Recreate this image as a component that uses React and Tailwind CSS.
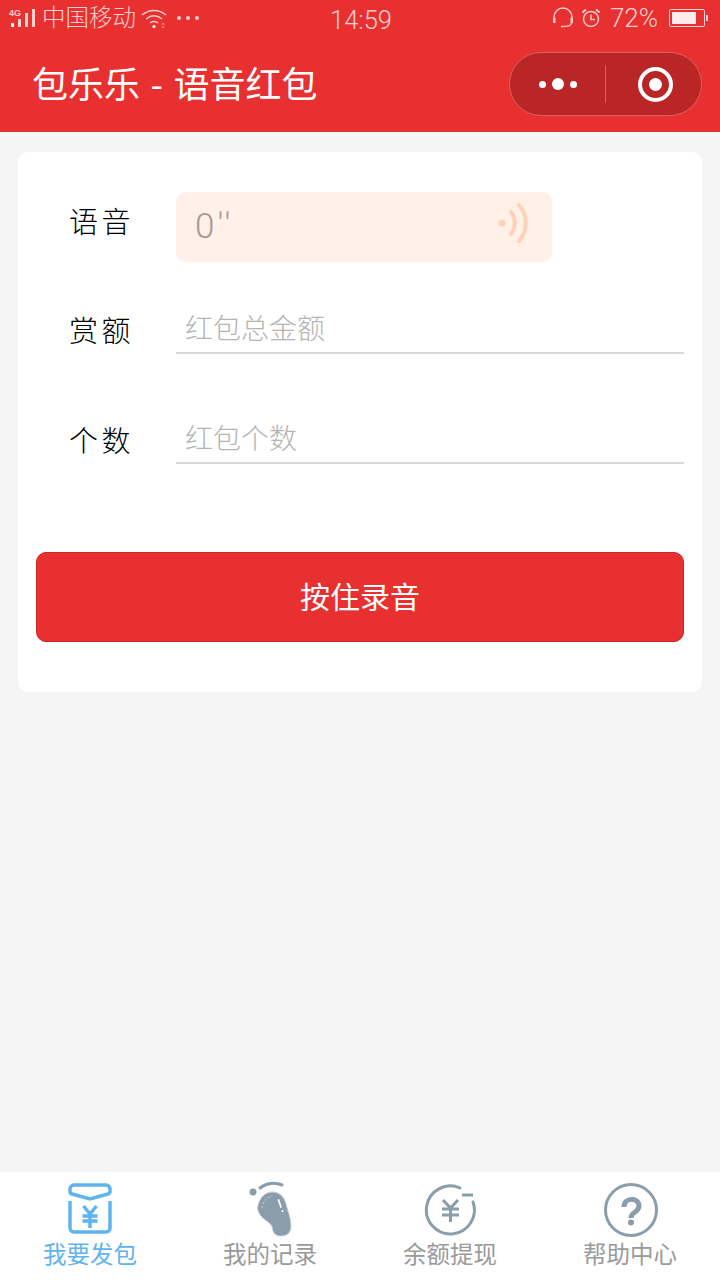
function StatusBar() {
    return (
        <div className="h-[40px] flex items-center justify-between text-[23.5px] text-[#fbd0d0] relative">
            <div className="flex items-center pl-[9px] h-full">
                <svg width="28" height="22" viewBox="0 0 28 22" className="-mt-[2px]">
                    <text x="0" y="8" fontSize="9" fontWeight="700" fill="#fbd0d0" fontFamily="Liberation Sans, sans-serif">4G</text>
                    <rect x="2" y="15" width="3" height="4" fill="#fff" />
                    <rect x="9" y="11" width="3" height="8" fill="#fbd0d0" />
                    <rect x="16" y="5" width="3" height="14" fill="#fbd0d0" />
                    <rect x="23" y="1" width="3" height="18" fill="#fbd0d0" />
                </svg>
                <span className="ml-[5px] leading-none -mt-[7px] font-light">中国移动</span>
                <svg width="26" height="20" viewBox="0 0 26 20" className="ml-[5px] -mt-[2px]" fill="none" stroke="#fbd0d0" strokeWidth="1.6">
                    <path d="M1 6 C8 0 18 0 25 6" />
                    <path d="M5 10 C10 6 16 6 21 10" />
                    <path d="M9 14 C11 12 15 12 17 14" />
                    <circle cx="13" cy="17.5" r="1.6" fill="#fff" stroke="none" />
                    <path d="M20 15.5 h4 l-2 -2z M20 17.5 h4 l-2 2z" fill="#f58a8a" stroke="none" />
                </svg>
                <div className="flex gap-[5px] ml-[10px] -mt-[4px]">
                    <span className="w-[4px] h-[4px] rounded-full bg-[#fbd0d0]" />
                    <span className="w-[4px] h-[4px] rounded-full bg-[#fbd0d0]" />
                    <span className="w-[4px] h-[4px] rounded-full bg-[#fbd0d0]" />
                </div>
            </div>
            <span className="absolute left-[330px] top-[5px] text-[25.5px] leading-[30px] font-['Roboto',sans-serif] font-light">14:59</span>
            <div className="flex items-center pr-[12px] -mt-[4px]">
                <svg width="22" height="22" viewBox="0 0 22 22" fill="none" stroke="#fbd0d0" strokeWidth="1.4" className="-ml-[1px]">
                    <path d="M2 12 V10 a9 9 0 0 1 18 0 V12" />
                    <rect x="1" y="11" width="2.5" height="5" fill="#fbd0d0" stroke="none" />
                    <rect x="18.5" y="11" width="2.5" height="5" fill="#fbd0d0" stroke="none" />
                    <path d="M19.5 16 C19 19 16 19.5 9 19.5" />
                </svg>
                <svg width="20" height="20" viewBox="0 0 20 20" className="ml-[7px]" fill="none" stroke="#fbd0d0" strokeWidth="1.4">
                    <circle cx="10" cy="11" r="7.5" />
                    <path d="M10 6.5 V11.5 H14" />
                    <path d="M1.5 4.5 L5 1.5 M18.5 4.5 L15 1.5" strokeWidth="2" />
                </svg>
                <span className="ml-[9px] text-[26px] leading-[30px] font-['Roboto',sans-serif] font-light">72%</span>
                <div className="ml-[11px] w-[36px] h-[18px] border border-[#fbd0d0] rounded-[2px] p-[2px]">
                    <div className="w-[24px] h-full bg-[#fdeaea]" />
                </div>
                <div className="ml-[1px] w-[2px] h-[6px] bg-[#fbd0d0]" />
            </div>
        </div>
    )
}

function NavBar() {
    return (
        <div className="h-[92px] flex items-center justify-between pl-[32px] pr-[18px]">
            <h1 className="text-[36px] font-normal text-white leading-none -mt-[8px] [word-spacing:2.5px]">包乐乐 - 语音红包</h1>
            <div className="w-[193px] h-[64px] -mt-[4px] rounded-full bg-[#ba2626] border border-[#d8605f] flex items-center">
                <div className="w-[95px] flex items-center justify-center gap-[6px]">
                    <span className="w-[7px] h-[7px] rounded-full bg-white" />
                    <span className="w-[12px] h-[12px] rounded-full bg-white" />
                    <span className="w-[7px] h-[7px] rounded-full bg-white" />
                </div>
                <div className="w-px h-[38px] bg-[#d8605f]" />
                <div className="flex-1 flex items-center justify-center pl-[4px]">
                    <div className="w-[35px] h-[35px] rounded-full border-[4px] border-white flex items-center justify-center">
                        <span className="w-[13px] h-[13px] rounded-full bg-white" />
                    </div>
                </div>
            </div>
        </div>
    )
}

function Row({ label, placeholder, className }) {
    return (
        <div className={`flex ${className}`}>
            <label className="w-[158px] pl-[51px] text-[29px] text-black font-light leading-none tracking-[3.5px] pt-[23px]">{label}</label>
            <div className="flex-1 h-[62px] border-b-2 border-[#d9d9d9] pl-[9px] text-[28px] leading-[70px] text-[#b4b4b4] font-light">{placeholder}</div>
        </div>
    )
}

function Form() {
    return (
        <div className="mx-[18px] mt-[20px] h-[540px] bg-white rounded-[10px] pr-[18px] pt-[40px]">
            <div className="flex">
                <label className="w-[158px] pl-[51px] text-[29px] text-black font-light leading-none tracking-[3.5px] pt-[14px]">语音</label>
                <div className="w-[376px] h-[70px] rounded-[10px] bg-[#fff1e8] flex items-center justify-between pl-[19px] pr-[21px]">
                    <span className="text-[35px] text-[#a59a92] font-light font-['Roboto',sans-serif] tracking-[3px]">0''</span>
                    <svg width="34" height="40" viewBox="0 0 34 40" fill="none" stroke="#ffd2b8" strokeWidth="4" strokeLinecap="round" className="-mt-[8px]">
                        <circle cx="5" cy="20" r="3.5" fill="#ffd2b8" stroke="none" />
                        <path d="M14 9 C19 15 19 25 14 31" />
                        <path d="M22 2 C31 12 31 28 22 38" />
                    </svg>
                </div>
            </div>
            <Row label="赏额" placeholder="红包总金额" className="mt-[30px]" />
            <Row label="个数" placeholder="红包个数" className="mt-[48px]" />
            <button className="block ml-[18px] mt-[88px] w-[648px] h-[90px] pb-[4px] rounded-[10px] bg-[#e93030] border border-[#c92626] text-white text-[30px] font-normal">按住录音</button>
        </div>
    )
}

function Tab({ label, active, children }) {
    return (
        <div className="flex-1 flex flex-col items-center">
            <div className="h-[52px] flex items-center justify-center">{children}</div>
            <span className={`text-[23.5px] leading-[30px] font-normal mt-[4px] ${active ? "text-[#5fb4f0]" : "text-[#9a9a9a]"}`}>{label}</span>
        </div>
    )
}

function TabBar() {
    return (
        <div className="h-[108px] bg-white flex pt-[10px]">
            <Tab label="我要发包" active>
                <svg width="44" height="52" viewBox="0 0 44 52" fill="none" stroke="#5fb4f0" strokeWidth="3.5" className="mt-[1px]">
                    <path d="M6 2 H38 a4 4 0 0 1 4 4 V8 a3 3 0 0 1 -2 3 L22 16 L4 11 a3 3 0 0 1 -2 -3 V6 a4 4 0 0 1 4 -4Z" />
                    <path d="M2 18 V45 a4 4 0 0 0 4 4 H38 a4 4 0 0 0 4 -4 V18" />
                    <path d="M15.5 23 L22 31 L28.5 23 M14.5 33 H29.5 M14.5 38 H29.5 M22 31 V45" strokeWidth="3.5" />
                </svg>
            </Tab>
            <Tab label="我的记录">
                <svg width="48" height="60" viewBox="0 0 48 60" className="mt-[4px] ml-[4px]">
                    <circle cx="5" cy="12" r="3.5" fill="#8a9dab" />
                    <path d="M12 8 C18 3 27 2 34 5" fill="none" stroke="#8a9dab" strokeWidth="3" strokeLinecap="round" />
                    <path d="M9.5 28 C11 17 18 12 24 12 C31 12 36 16 38 24 C40 32 43 38 43 46 C43 53 39 56 33 56 C27 56 25 53 24 47 C23 41 11 40 9.5 28Z" fill="#8a9dab" stroke="#c8d2da" strokeWidth="1" />
                    <path d="M30.5 20 L33 27" stroke="#fff" strokeWidth="1.8" strokeLinecap="round" />
                    <circle cx="34.5" cy="31" r="1" fill="#fff" />
                    <path d="M14 28 C15 21 19 17 24 16.5" fill="none" stroke="#c8d2da" strokeWidth="1" strokeDasharray="2 2" />
                </svg>
            </Tab>
            <Tab label="余额提现">
                <svg width="52" height="52" viewBox="0 0 52 52" fill="none" stroke="#8a9dab" strokeWidth="3" className="mt-[4px]">
                    <path d="M36 4 A24 24 0 1 0 49 18" strokeLinecap="round" />
                    <path d="M38 11 H49" />
                    <path d="M19 16 L26.5 24 L34 16 M18 25 H35 M18 31 H35 M26.5 24 V38" />
                </svg>
            </Tab>
            <Tab label="帮助中心">
                <svg width="54" height="54" viewBox="0 0 54 54" fill="none" stroke="#8a9dab" strokeWidth="3" className="mt-[4px] ml-[2px]">
                    <circle cx="27" cy="27" r="25.5" />
                    <path d="M20 24 C20 14 35 14 35 23 C35 30 27 28 27 35" strokeWidth="5" />
                    <circle cx="27" cy="39.5" r="3" fill="#8a9dab" stroke="none" />
                </svg>
            </Tab>
        </div>
    )
}

export default function App() {
    return (
        <div className="w-[720px] h-[1280px] flex flex-col bg-[#f5f5f5] font-['Noto_Sans_CJK_SC','Noto_Sans',sans-serif] overflow-hidden">
            <div className="bg-[#e93030]">
                <StatusBar />
                <NavBar />
            </div>
            <div className="flex-1">
                <Form />
            </div>
            <TabBar />
        </div>
    )
}
